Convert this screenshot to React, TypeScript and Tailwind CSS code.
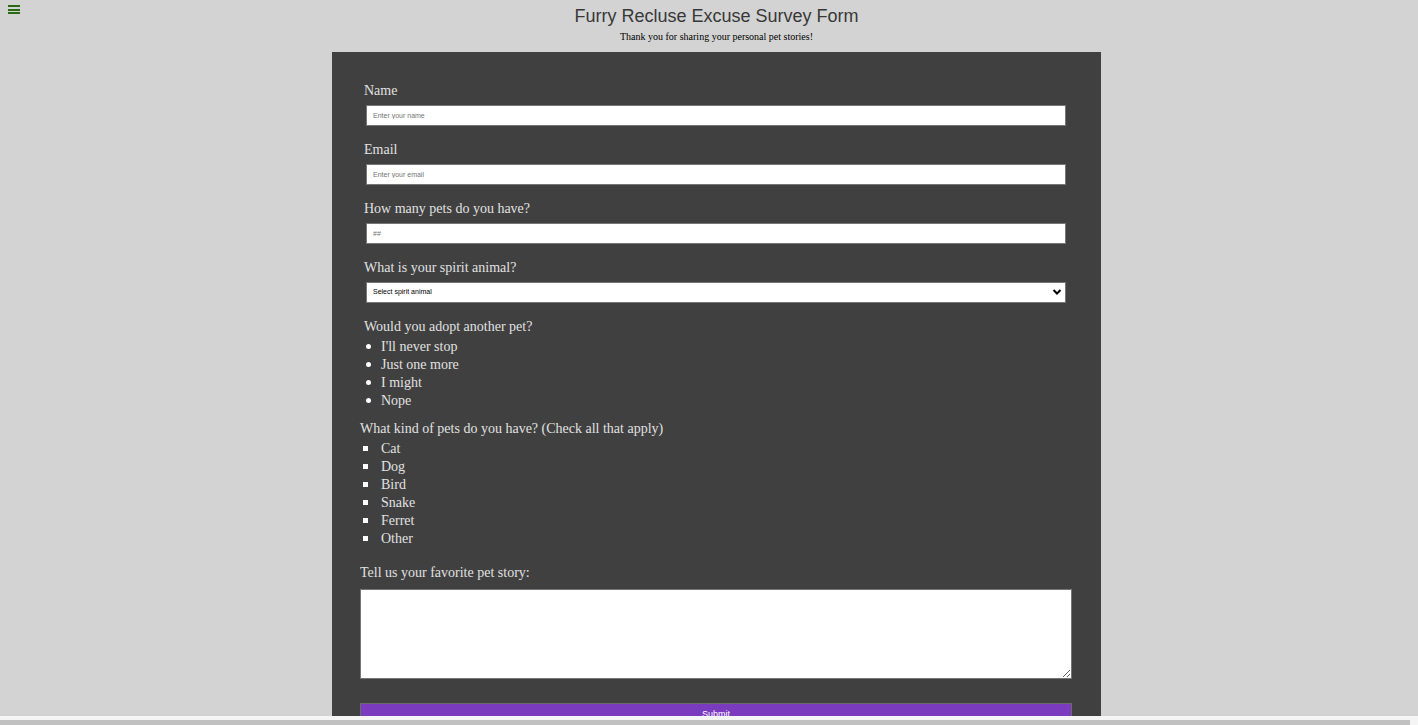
import React from "react";

const serif = { fontFamily: '"Liberation Serif", "Times New Roman", serif' };

function Field({ label, children }: { label: string; children: React.ReactNode }) {
  return (
    <div className="mb-[15px] pl-[4px]">
      <label className="block text-[14px] leading-[17px] text-[#e0e0e0] mb-[6px]">{label}</label>
      <div className="pl-[2px]">{children}</div>
    </div>
  );
}

export default function App() {
  const inputCls =
    "block w-[700px] h-[21px] bg-white border border-[#767676] px-[6px] text-[7px] text-black placeholder:text-[#757575] outline-none [font-family:'Liberation_Sans',Arial,sans-serif]";
  return (
    <div className="min-h-screen bg-[#d3d3d3] overflow-hidden" style={serif}>
      <div className="absolute left-[8px] top-[5px] flex flex-col gap-[1.5px]">
        <div className="w-[12px] h-[2px] bg-[#2a6a12]" />
        <div className="w-[12px] h-[2px] bg-[#2a6a12]" />
        <div className="w-[12px] h-[2px] bg-[#2a6a12]" />
      </div>
      <div className="w-[1433px]">
        <header className="pt-[6px] flex flex-col items-center">
          <h1 className="text-[18px] leading-[20px] text-[#383838] [font-family:'Liberation_Sans',Arial,sans-serif]">
            Furry Recluse Excuse Survey Form
          </h1>
          <p className="mt-[5px] text-[10px] leading-[12px] text-black">
            Thank you for sharing your personal pet stories!
          </p>
        </header>
        <main className="mt-[9px] mx-auto w-[769px] bg-[#404040] pt-[30px] px-[28px] pb-[40px]">
          <Field label="Name">
            <input className={inputCls} placeholder="Enter your name" />
          </Field>
          <Field label="Email">
            <input className={inputCls} placeholder="Enter your email" />
          </Field>
          <Field label="How many pets do you have?">
            <input className={inputCls} placeholder="##" />
          </Field>
          <Field label="What is your spirit animal?">
            <div className="relative w-[700px] h-[21px] bg-white border border-[#767676] flex items-center px-[6px] [font-family:'Liberation_Sans',Arial,sans-serif]">
              <span className="text-[7px] text-black font-medium">Select spirit animal</span>
              <svg className="absolute right-[3px] top-[5px]" width="10" height="8" viewBox="0 0 10 8">
                <path d="M1.5 2 L5 5.5 L8.5 2" fill="none" stroke="#000" strokeWidth="2" />
              </svg>
            </div>
          </Field>
          <div className="pl-[4px]">
            <div className="text-[14px] leading-[17px] text-[#e0e0e0] mb-[2px]">Would you adopt another pet?</div>
            {["I'll never stop", "Just one more", "I might", "Nope"].map((t) => (
              <div key={t} className="flex items-center h-[18px] text-[14px] text-[#e0e0e0]">
                <span className="w-[5px] h-[5px] rounded-full bg-white ml-[2px] mr-[10px]" />
                {t}
              </div>
            ))}
          </div>
          <div className="mt-[11px]">
            <div className="text-[14px] leading-[17px] text-[#e0e0e0] mb-[2px]">What kind of pets do you have? (Check all that apply)</div>
            {["Cat", "Dog", "Bird", "Snake", "Ferret", "Other"].map((t) => (
              <div key={t} className="flex items-center h-[18px] text-[14px] text-[#e0e0e0]">
                <span className="w-[5px] h-[5px] bg-white ml-[3px] mr-[13px]" />
                {t}
              </div>
            ))}
          </div>
          <div className="mt-[17px] text-[14px] leading-[17px] text-[#e0e0e0] mb-[8px]">Tell us your favorite pet story:</div>
          <textarea className="block w-[712px] h-[90px] bg-white border border-[#767676] outline-none" />
          <button className="mt-[24px] block w-[712px] h-[24px] bg-[#7a3bbf] border border-[#6a6a6a] text-white text-[9px] [font-family:'Liberation_Sans',Arial,sans-serif]">
            Submit
          </button>
        </main>
      </div>
      <div className="fixed left-0 right-0 bottom-0 h-[9px] bg-[#f5f5f5] flex flex-col justify-end">
        <div className="h-[5px] w-[1410px] bg-[#c1c1c1]" />
      </div>
    </div>
  );
}
